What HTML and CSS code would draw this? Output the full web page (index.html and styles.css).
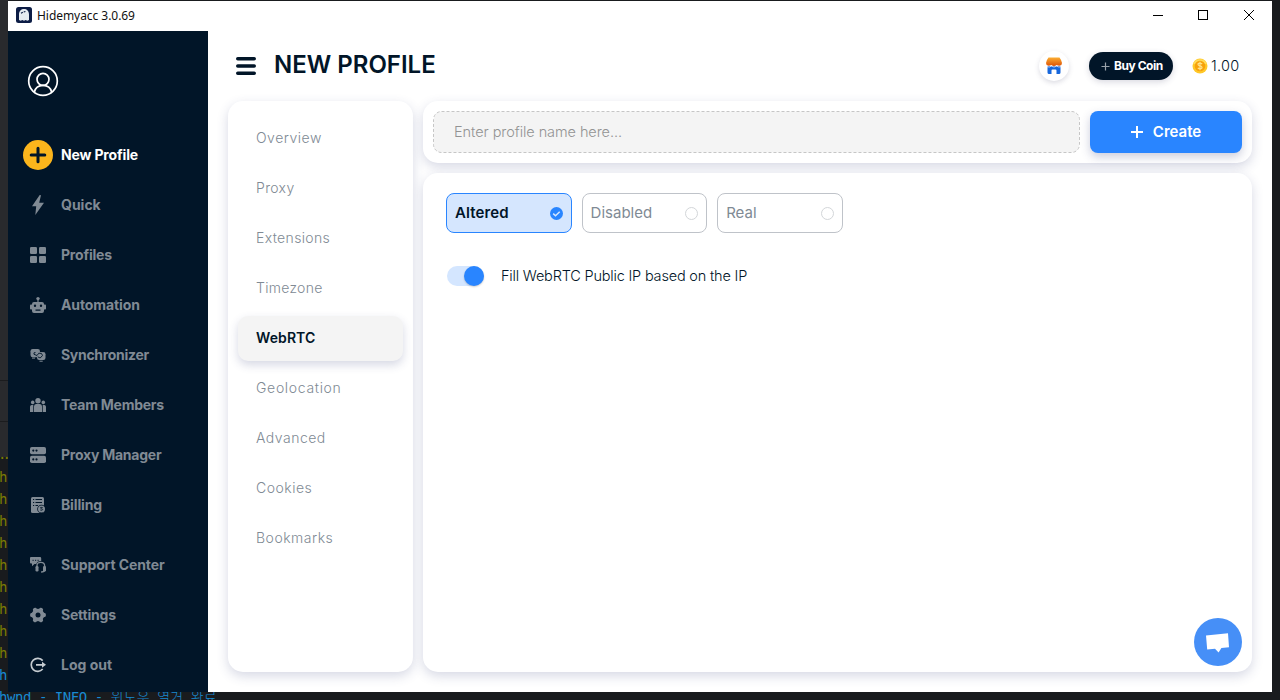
FILE: index.html
```html
<!DOCTYPE html>
<html lang="en">
<head>
<meta charset="utf-8">
<title>Hidemyacc 3.0.69</title>
<link rel="stylesheet" href="styles.css">
</head>
<body>
<div class="editor-edge"></div>
<div class="terminal">
<div class="log dots">..</div>
<div class="log">h</div><div class="log">h</div><div class="log">h</div><div class="log">h</div><div class="log">h</div><div class="log">h</div><div class="log">h</div><div class="log">h</div><div class="log">h</div>
<div class="log info">h</div>
<div class="log info">hwnd - INFO - <span class="ko">윈도우 열거 완료</span></div>
</div>
<div class="window">
  <header class="titlebar">
    <svg class="app-icon" width="16" height="16" viewBox="0 0 16 16"><rect width="16" height="16" rx="2.500" fill="#0c1c45"/><path d="M3 13V7.500C3 4 5.200 2 8 2s5 2 5 5.500V13l-1.700.7-1.600-.7-1.700.7-1.700-.7-1.600.7z" fill="#e6ebf0"/><path d="M5 6.300l1.800-1M7.700 5l1.700-.5" stroke="#0c1c45" stroke-width="1.100"/></svg>
    <span class="app-name">Hidemyacc 3.0.69</span>
    <svg class="win-controls" width="102" height="12" viewBox="0 0 102 12" fill="none" stroke="#000" shape-rendering="crispEdges"><path d="M0 6.500h10M45.500 1.500h9v9h-9z"/><path d="M91 1l10 10M101 1L91 11" shape-rendering="auto"/></svg>
  </header>
  <div class="main">
    <aside class="sidebar">
      <svg class="avatar" width="32" height="32" viewBox="0 0 32 32" fill="none" stroke="#fff" stroke-width="1.700"><circle cx="16" cy="16" r="14.300"/><circle cx="16" cy="14.300" r="6"/><path d="M7.300 27.200C8.300 22.800 11.600 20.300 16 20.300s7.700 2.500 8.700 6.900"/></svg>
      <nav class="nav">
        <a class="item active"><svg class="plus-icon" width="30" height="30" viewBox="0 0 30 30"><circle cx="15" cy="15" r="15" fill="#fbb51c"/><path d="M15 8.200v13.600M8.200 15h13.600" stroke="#011528" stroke-width="3" stroke-linecap="round"/></svg><span class="n1">New Profile</span></a>
        <a class="item"><svg class="icon" width="20" height="20" viewBox="0 0 20 20"><path d="M11.700 0L4 11.300h4.200L7.300 20 16 7.800h-4.800L13 .3z"/></svg><span class="n2">Quick</span></a>
        <a class="item"><svg class="icon" width="20" height="20" viewBox="0 0 20 20"><rect x="2" y="2" width="7" height="7" rx="1.300"/><rect x="11" y="2" width="7" height="7" rx="1.300"/><rect x="2" y="11" width="7" height="7" rx="1.300"/><rect x="11" y="11" width="7" height="7" rx="1.300"/></svg><span class="n3">Profiles</span></a>
        <a class="item"><svg class="icon" width="20" height="20" viewBox="0 0 20 20"><circle cx="10" cy="3.600" r="1.700"/><path d="M9.400 4h1.200v4H9.400z"/><path fill-rule="evenodd" d="M6 7h8q2 0 2 2v7q0 2-2 2H6q-2 0-2-2V9q0-2 2-2zm1 2.500a1.200 1.200 0 100 2.400 1.200 1.200 0 000-2.400zm6 0a1.200 1.200 0 100 2.400 1.200 1.200 0 000-2.400zM7.500 14.500v1.200h5v-1.200z"/><rect x="2" y="9.500" width="2.500" height="5" rx=".9"/><rect x="15.500" y="9.500" width="2.500" height="5" rx=".9"/></svg><span class="n4">Automation</span></a>
        <a class="item"><svg class="icon" width="20" height="20" viewBox="0 0 20 20"><rect x="2.500" y="4" width="9.500" height="8.200" rx="2.200"/><rect x="9" y="7" width="8.500" height="8" rx="2.200"/><path d="M7.500 7.500Q5.200 7.300 6 9.300l3 1.200 1.800-2.300 2.700.3 1 2-2.300 2.500-2.500-1.200" fill="none" stroke="#011528" stroke-width=".9"/><path d="M12.400 5.200v1.400H16M8.500 12.700v1.600" fill="none" stroke="#011528" stroke-width=".6"/><rect x="4" y="12.600" width="3" height="1"/><rect x="11.500" y="15.700" width="3.200" height="1"/></svg><span class="n5">Synchronizer</span></a>
        <a class="item"><svg class="icon" width="20" height="20" viewBox="0 0 20 20"><circle cx="10" cy="5.700" r="2.700"/><circle cx="4.700" cy="7.400" r="1.800"/><circle cx="15.300" cy="7.400" r="1.800"/><path d="M6 17V11.500Q6 9 8 9h4q2 0 2 2.500V17zM2 17v-5q0-2.300 3.300-2.300Q5.300 11 5.300 12v5zM18 17v-5q0-2.300-3.300-2.300Q14.700 11 14.700 12v5z"/></svg><span class="n6">Team Members</span></a>
        <a class="item"><svg class="icon" width="20" height="20" viewBox="0 0 20 20"><rect x="2" y="2" width="16" height="7.300" rx="1.800"/><rect x="2" y="10.800" width="16" height="7.200" rx="1.800"/><g fill="#011528"><circle cx="5.300" cy="5.600" r="1.100"/><circle cx="8.500" cy="5.600" r="1.100"/><circle cx="5.300" cy="14.400" r="1.100"/><circle cx="8.500" cy="14.400" r="1.100"/></g></svg><span class="n7">Proxy Manager</span></a>
        <a class="item"><svg class="icon" width="20" height="20" viewBox="0 0 20 20"><rect x="3" y="2" width="13" height="16" rx="1.500"/><path d="M5 4.500h1.200M7.500 4.500H14M5 7.500h1.200M7.500 7.500H14M5 10.500h1.200M7.500 10.500H10" stroke="#011528" stroke-width="1"/><circle cx="13.500" cy="14" r="4.300" fill="#011528"/><circle cx="13.500" cy="14" r="3.500"/><path d="M14.800 12.700q-2.600-1-2.500.3l2.500 1.500q0 1.300-2.600.5" stroke="#011528" fill="none" stroke-width=".8"/></svg><span class="n8">Billing</span></a>
        <a class="item gap"><svg class="icon" width="20" height="20" viewBox="0 0 20 20"><path d="M3 2h9q1.200 0 1.200 1.200V6Q9 6 8.300 9H6.500L4 11.300V8.500H3Q2 8.500 2 7.500V3q0-1 1-1z"/><path d="M4.500 5.300h1.200M7 5.300h1.200M9.500 5.300h1.200" stroke="#011528"/><path d="M9 12v-1.500q0-3.200 3.800-3.200t3.800 3.200V15q0 2-3.500 2" fill="none" stroke="#808a94" stroke-width="1.300"/><rect x="7.500" y="11" width="3" height="5.500" rx="1.200"/><rect x="15" y="11" width="3" height="5.500" rx="1.200"/></svg><span class="n9">Support Center</span></a>
        <a class="item"><svg class="icon" width="20" height="20" viewBox="0 0 20 20"><g stroke="#808a94" stroke-width="4.400" stroke-linecap="round"><path d="M4.200 10h11.600M7.100 5l5.800 10M12.900 5L7.100 15"/></g><circle cx="10" cy="10" r="6.300"/><circle cx="10" cy="10" r="2.500" fill="#011528"/></svg><span class="n10">Settings</span></a>
        <a class="item"><svg class="icon" width="20" height="20" viewBox="0 0 20 20"><path d="M14.700 5.600A6.500 6.500 0 1 0 14.700 14M8 9.800h7" fill="none" stroke="#c5cbd0" stroke-width="1.700"/><path d="M14 6.800l4 3-4 3z" fill="#c5cbd0"/></svg><span class="n11">Log out</span></a>
      </nav>
    </aside>
    <section class="content">
      <div class="topbar">
        <svg class="burger" width="20" height="20" viewBox="0 0 20 20" stroke="#011528" stroke-width="3.600" stroke-linecap="round"><path d="M1.800 2.800h16.400M1.800 10h16.400M1.800 17.200h16.400"/></svg>
        <h1>NEW PROFILE</h1>
        <span class="shop"><svg width="18" height="18" viewBox="0 0 18 18"><defs><linearGradient id="roof" x2="0" y2="1"><stop stop-color="#fbad31"/><stop offset="1" stop-color="#dc5208"/></linearGradient></defs><path d="M2.500 9h13v6.500q0 1.500-1.500 1.500h-2.500v-3.500q0-1-1-1h-3q-1 0-1 1V17H4q-1.500 0-1.500-1.500z" fill="#1767dc"/><path d="M3.500 .5h11Q16.200 2.500 17 6 17 8.500 14.500 8.800 12.600 8.800 11.700 8 10.500 9 9 9T6.300 8Q5.400 8.800 3.500 8.800 1 8.500 1 6 1.800 2.500 3.500 .5z" fill="url(#roof)"/><path d="M2 9.700q2.500.8 4.300-.5Q9 10.800 11.700 9.200q2 1.300 4.300.5" fill="none" stroke="#fff" stroke-width=".7"/></svg></span>
        <button class="buy"><svg width="9" height="9" viewBox="0 0 9 9"><path d="M4.500 .5v8M.5 4.500h8" stroke="#99a1a9" stroke-width="1.200"/></svg><span>Buy Coin</span></button>
        <svg class="coin" width="16" height="16" viewBox="0 0 16 16"><circle cx="8" cy="8" r="7.500" fill="#ffc828"/><path d="M1 6a7.500 7.500 0 0 1 14 0z" fill="#ffdc59"/><circle cx="8" cy="8" r="5.300" fill="#f7a20b"/><path d="M10.200 5.900Q8 4.300 6.200 5.600 5.400 7.100 8 7.900T9.800 10.300Q8 11.700 5.800 10M8 3.700v8.600" fill="none" stroke="#ffe38a" stroke-width="1.200"/></svg>
        <span class="balance">1.00</span>
      </div>
      <div class="panels">
        <div class="card menu">
          <a class="m1"><span>Overview</span></a><a class="m2"><span>Proxy</span></a><a class="m3"><span>Extensions</span></a><a class="m4"><span>Timezone</span></a><a class="current"><span>WebRTC</span></a><a class="m6"><span>Geolocation</span></a><a class="m7"><span>Advanced</span></a><a class="m8"><span>Cookies</span></a><a class="m9"><span>Bookmarks</span></a>
        </div>
        <div class="column">
          <div class="card namebar">
            <div class="field"><svg class="dash" width="647" height="42"><rect x=".5" y=".5" width="646" height="41" rx="8" fill="#f4f4f4" stroke="#c6c6c6" stroke-dasharray="3 2"/></svg><span class="placeholder">Enter profile name here...</span></div>
            <button class="create"><svg width="12" height="12" viewBox="0 0 12 12"><path d="M6 0v12M0 6h12" stroke="#fff" stroke-width="2"/></svg><span>Create</span></button>
          </div>
          <div class="card settings">
            <div class="options">
              <div class="option selected"><span>Altered</span><svg width="13" height="13" viewBox="0 0 13 13"><circle cx="6.500" cy="6.500" r="6.500" fill="#2985ff"/><path d="M3.200 6.600l2.300 2.200 4.200-4" fill="none" stroke="#d5e6fe" stroke-width="1.500"/></svg></div>
              <div class="option"><span>Disabled</span><i class="ring"></i></div>
              <div class="option"><span>Real</span><i class="ring"></i></div>
            </div>
            <div class="switch-row"><span class="switch"><i class="knob"></i></span><span class="switch-label">Fill WebRTC Public IP based on the IP</span></div>
            <div class="chat"><svg width="48" height="48" viewBox="0 0 48 48"><circle cx="24" cy="24" r="24" fill="#468ff7"/><path d="M12 17.500l22-2.200 1 14-7.600.8-2.800 4.500-3.600-3.900-7.800.8z" fill="#fff"/></svg></div>
          </div>
        </div>
      </div>
    </section>
  </div>
</div>
</body>
</html>
```
FILE: styles.css
```css
* { box-sizing: border-box; }
body { margin: 0; height: 700px; overflow: hidden; position: relative; background: #191b1e; font-family: Inter, "Noto Sans", sans-serif; white-space: nowrap; }
button { border: 0; padding: 0; font: inherit; }
svg { display: block; flex: none; }
.editor-edge { width: 8px; height: 457px; background: linear-gradient(#1b1c1e, #1b1c1e) 0 380px / 8px 1px no-repeat, linear-gradient(#1b1c1e, #1b1c1e) 0 421px / 8px 1px no-repeat, #292a2d; }
.terminal { position: absolute; left: 0; top: 449px; width: 1280px; height: 251px; font: 14px/22px "DejaVu Sans Mono", "Noto Sans CJK KR", monospace; letter-spacing: -.45px; color: #7c7c02; text-indent: -1px; }
.log { height: 22px; }
.log.dots { height: 17px; line-height: 10px; letter-spacing: -4px; text-indent: -2px; }
.info { color: #178ad2; }
.ko { letter-spacing: .2px; word-spacing: 4px; font-family: "Noto Sans CJK KR", sans-serif; font-weight: 300; line-height: 1; }
.window { position: absolute; left: 8px; top: 1px; width: 1264px; height: 691px; background: #fff; display: flex; flex-direction: column; }
.titlebar { height: 30px; display: flex; align-items: center; padding: 0 17px 2px 8px; }
.app-icon { margin-right: 5px; }
.app-name { font: 12px "Noto Sans", sans-serif; letter-spacing: -.05px; color: #111; flex: 1; }
.main { flex: 1; display: flex; min-height: 0; }
.sidebar { width: 200px; background: #011528; padding-top: 34px; overflow: hidden; }
.avatar { margin: 0 0 33px 19px; }
.item { display: flex; align-items: center; height: 50px; padding-left: 20px; color: #808a94; font-size: 14px; font-weight: 700; }
.item span, .menu span, .placeholder, .create span, .option span, .buy span, .switch-label { padding-bottom: 2px; }
.n1, .n8 { letter-spacing: -.15px; }
.n3, .n10 { letter-spacing: -.2px; }
.n4, .n9 { letter-spacing: -.1px; }
.n5 { letter-spacing: -.3px; }
.n6, .n7 { letter-spacing: -.24px; }
.item.gap { margin-top: 10px; }
.item.active { color: #fff; padding-left: 15px; }
.icon { margin-right: 13px; fill: #808a94; }
.plus-icon { margin-right: 8px; }
.content { flex: 1; display: flex; flex-direction: column; padding: 0 20px 20px; min-width: 0; }
.topbar { height: 70px; display: flex; align-items: center; padding: 0 12px 0 8px; }
.burger { margin-right: 18px; }
h1 { margin: 0; padding-bottom: 4px; font-size: 24px; font-weight: 600; color: #011528; flex: 1; }
.shop { width: 30px; height: 30px; border-radius: 50%; background: #fff; display: grid; place-items: center; box-shadow: 0 2px 5px rgba(60,60,100,.18); margin-right: 20px; }
.buy { width: 84px; height: 28px; border-radius: 14px; background: #011528; color: #fff; display: flex; align-items: center; gap: 4px; padding-left: 12px; font-size: 12px; font-weight: 700; letter-spacing: -.45px; margin-right: 19px; box-shadow: 0 2px 6px rgba(60,60,100,.2); }
.buy span { padding-bottom: 1px; }
.coin { margin-right: 3px; }
.balance { font-size: 14.5px; font-weight: 300; letter-spacing: .25px; padding-bottom: 1px; color: #011528; width: 29px; }
.panels { flex: 1; display: flex; gap: 10px; }
.card { background: #fff; border-radius: 15px; box-shadow: 0 4px 12px rgba(50,60,120,.2); }
.menu { width: 185px; padding: 15px 10px; }
.menu a { display: flex; align-items: center; height: 45px; margin-bottom: 5px; padding-left: 18px; border-radius: 10px; font-size: 14px; font-weight: 300; letter-spacing: .5px; color: #808a94; }
.menu .m2, .menu .m3 { letter-spacing: .35px; }
.menu .m4 { letter-spacing: .28px; }
.menu .m6 { letter-spacing: .68px; }
.menu .current { background: #f4f4f4; color: #011528; font-weight: 600; letter-spacing: .1px; box-shadow: 0 4px 10px rgba(50,60,120,.2); }
.column { flex: 1; display: flex; flex-direction: column; gap: 10px; }
.namebar { height: 62px; padding: 10px; display: flex; gap: 10px; }
.field { width: 647px; display: grid; align-items: center; color: #939393; font-size: 14.5px; font-weight: 300; letter-spacing: -.07px; }
.field > * { grid-area: 1 / 1; }
.placeholder { padding-left: 21px; }
.create { flex: 1; border-radius: 8px; background: #2985ff; color: #fff; display: flex; align-items: center; justify-content: center; gap: 10px; font-size: 15px; font-weight: 600; box-shadow: 0 4px 10px rgba(50,60,120,.25); }
.settings { flex: 1; padding: 20px 23px; position: relative; }
.options { display: flex; gap: 10px; }
.option { width: 125.6px; height: 40px; border: 1px solid #bfc3c9; border-radius: 8px; display: flex; align-items: center; justify-content: space-between; padding: 0 8px; font-size: 15px; color: #808a94; }
.option span { padding-bottom: 1px; }
.selected { background: #d5e6fe; border-color: #2985ff; color: #011528; font-weight: 600; letter-spacing: .1px; }
.ring { width: 13px; height: 13px; border: 1px solid #d3d6d9; border-radius: 50%; }
.switch-row { display: flex; align-items: center; margin-top: 33px; height: 20px; padding-left: 1px; }
.switch { width: 37px; height: 20px; border-radius: 10px; background: #d4e6ff; display: flex; justify-content: flex-end; margin-right: 17px; }
.knob { width: 20px; height: 20px; border-radius: 50%; background: #2985ff; box-shadow: 0 1px 2px rgba(0,0,0,.2); }
.switch-label { font-size: 14.5px; font-weight: 300; letter-spacing: -.19px; color: #011528; }
.chat { position: absolute; right: 10px; bottom: 6px; }
```
